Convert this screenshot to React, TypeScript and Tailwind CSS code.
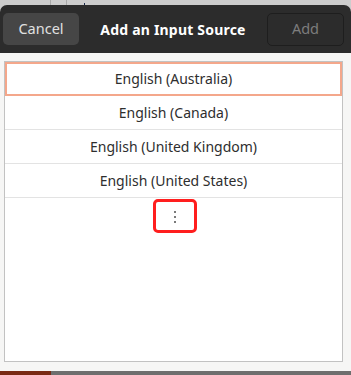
export default function App() {
  const sources = [
    'English (Australia)',
    'English (Canada)',
    'English (United Kingdom)',
    'English (United States)',
  ]

  return (
    <div className="w-[351px] h-[375px] flex flex-col overflow-hidden bg-[#cdcdcd] font-['Noto_Sans',sans-serif]">
      {/* strip of the window behind */}
      <div className="h-[5px] flex shrink-0">
        <div className="w-[51px] border-r border-[#a9a9a9]" />
        <div className="w-[16px] border-r border-[#a9a9a9]" />
        <div className="w-[17px]" />
        <div className="w-[1px] h-[2px] mt-[3px] bg-[#1b2a4a]" />
      </div>

      {/* header bar */}
      <div className="h-[48px] shrink-0 bg-[#2c2c2c] rounded-t-[7px] flex items-center justify-between pl-[3px] pr-[7px]">
        <button className="w-[76px] h-[32px] rounded-[5px] bg-[#464646] text-[#e0e0e0] text-[14.5px]">
          Cancel
        </button>
        <div className="text-white font-bold text-[14px] tracking-[0.2px]">Add an Input Source</div>
        <button className="w-[77px] h-[33px] rounded-[5px] border border-[#1e1e1e] text-[#7d7d7d] text-[14.5px]">
          Add
        </button>
      </div>

      {/* dialog body */}
      <div className="flex-1 bg-[#f6f6f5] pt-[8px] pl-[4px] pr-[8px] pb-[9px] flex">
        <div className="flex-1 bg-white border border-[#c2c2c2] flex flex-col">
          {sources.map((name, i) => (
            <div
              key={name}
              className={
                i === 0
                  ? 'h-[34px] border-b border-[#e3e3e3] flex items-center justify-center text-[14px] text-[#2e2e2e] outline-2 outline-[#f4a78b] -outline-offset-2'
                  : 'h-[34px] border-b border-[#e3e3e3] flex items-center justify-center text-[14px] text-[#2e2e2e]'
              }
            >
              {name}
            </div>
          ))}
          <div className="h-[36px] flex items-start justify-center pl-[2px] pt-[1px]">
            <div className="w-[44px] h-[34px] border-[3px] border-[#ff1e1e] rounded-[5px] flex flex-col items-center justify-center gap-[3px] pt-[1px]">
              <span className="w-[2px] h-[2px] bg-[#7a7a7a]" />
              <span className="w-[2px] h-[2px] bg-[#7a7a7a]" />
              <span className="w-[2px] h-[2px] bg-[#7a7a7a]" />
            </div>
          </div>
        </div>
      </div>

      {/* bottom strip */}
      <div className="h-[4px] shrink-0 flex">
        <div className="w-[51px] bg-[#7a2a14]" />
        <div className="flex-1 bg-[#6e6e6e]" />
      </div>
    </div>
  )
}
